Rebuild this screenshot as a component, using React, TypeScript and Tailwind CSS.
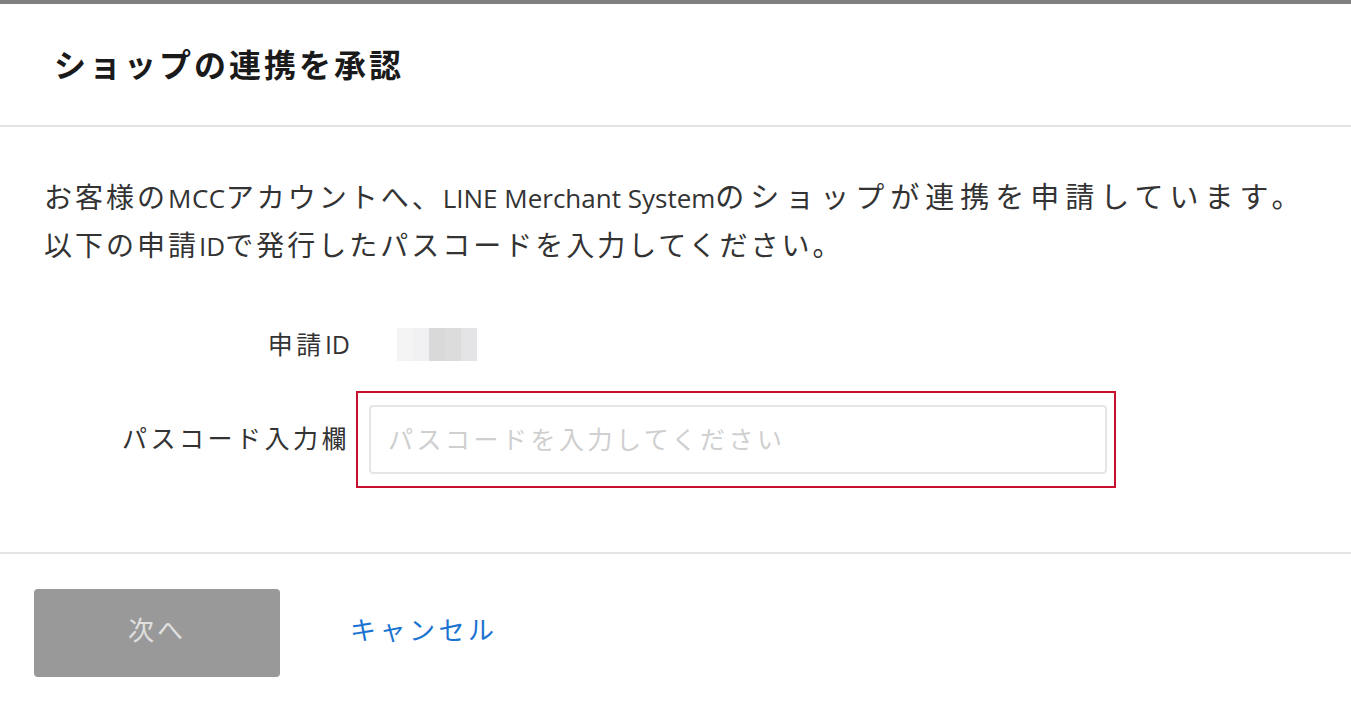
const font = { fontFamily: '"Open Sans", "Noto Sans CJK JP", sans-serif' }

export default function App() {
  return (
    <div className="w-[1351px] h-[712px] bg-white border-t-4 border-[#808080] text-[#222]" style={font}>
      <div className="h-[123px] border-b-2 border-[#e3e3e3] flex items-center pl-[54px]">
        <h1 className="text-[32px] font-bold tracking-[3px] text-[#1a1a1a]">ショップの連携を承認</h1>
      </div>
      <div className="px-[44px] pt-[46px] h-[425px]">
        <p className="text-[28px] leading-[47px] text-[#333]">
          <span className="tracking-[3px]">お客様の</span>
          <span className="text-[26px] tracking-[0.5px]">MCC</span>
          <span className="tracking-[3px]">アカウントへ、</span>
          <span className="text-[26px] tracking-normal">LINE Merchant System</span>
          <span className="text-[29px] tracking-[6px]">のショップが連携を申請しています。</span>
          <br />
          <span className="tracking-[3px]">以下の申請</span>
          <span className="text-[26px] tracking-normal">ID</span>
          <span className="tracking-[3px]">で発行したパスコードを入力してください。</span>
        </p>
        <div className="mt-[56px] flex items-center">
          <div className="w-[306px] text-right text-[25px] text-[#333]">
            <span className="tracking-[3.5px]">申請</span>ID
          </div>
          <div className="ml-[47px] flex h-[33px]">
            <div className="w-[16px] bg-[#f4f4f4]" />
            <div className="w-[16px] bg-[#f0f0f2]" />
            <div className="w-[16px] bg-[#d9d9d9]" />
            <div className="w-[16px] bg-[#dcdcdc]" />
            <div className="w-[16px] bg-[#e4e4e6]" />
          </div>
        </div>
        <div className="mt-[27px] flex items-center">
          <div className="w-[306px] text-right text-[25px] tracking-[3.5px] text-[#333]">パスコード入力欄</div>
          <div className="ml-[6px] border-2 border-[#c8102e] pl-[11px] pr-[7px] py-[12px]">
            <input
              className="w-[738px] h-[69px] border-2 border-[#e6e6e6] rounded-[4px] px-[17px] text-[25px] tracking-[3.5px] placeholder:text-[#cfcfcf] outline-none"
              placeholder="パスコードを入力してください"
              style={font}
            />
          </div>
        </div>
      </div>
      <div className="border-t-2 border-[#e3e3e3] pt-[35px] pl-[34px] flex items-center">
        <button className="w-[246px] h-[88px] bg-[#999999] rounded-[4px] text-[26px] tracking-[3px] text-[#e0e0e0] pb-[6px]" style={font}>
          次へ
        </button>
        <a className="ml-[70px] text-[26px] tracking-[3.5px] text-[#1a73d0] mb-[6px]">キャンセル</a>
      </div>
    </div>
  )
}
